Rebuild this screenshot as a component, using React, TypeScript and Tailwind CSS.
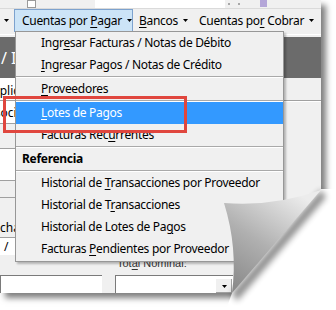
import React from 'react';

type Entry =
  | { type: 'item'; label: string; at: number; active?: boolean }
  | { type: 'sep' }
  | { type: 'head'; label: string };

const entries: Entry[] = [
  { type: 'item', label: 'Ingresar Facturas / Notas de Débito', at: 4 },
  { type: 'item', label: 'Ingresar Pagos / Notas de Crédito', at: 0 },
  { type: 'sep' },
  { type: 'item', label: 'Proveedores', at: 0 },
  { type: 'sep' },
  { type: 'item', label: 'Lotes de Pagos', at: 0, active: true },
  { type: 'item', label: 'Facturas Recurrentes', at: 12 },
  { type: 'sep' },
  { type: 'head', label: 'Referencia' },
  { type: 'sep' },
  { type: 'item', label: 'Historial de Transacciones por Proveedor', at: 13 },
  { type: 'item', label: 'Historial de Transacciones', at: 14 },
  { type: 'item', label: 'Historial de Lotes de Pagos', at: 24 },
  { type: 'item', label: 'Facturas Pendientes por Proveedor', at: 9 },
];

function Caret({ className = '' }: { className?: string }) {
  return (
    <svg width="5" height="3" viewBox="0 0 5 3" className={className}>
      <path d="M0 0H5L2.5 3Z" fill="currentColor" />
    </svg>
  );
}

function Mn({ text, at }: { text: string; at: number }) {
  return (
    <>
      {text.slice(0, at)}
      <span className="underline decoration-1 underline-offset-2">{text[at]}</span>
      {text.slice(at + 1)}
    </>
  );
}

function MenuBar() {
  return (
    <div className="h-[23px] shrink-0 flex items-stretch bg-[#f0f0f0] text-[12px] tracking-[-0.3px] text-black">
      <div className="w-[14px] flex items-center pl-[4px]">
        <Caret />
      </div>
      <div className="w-[119px] flex items-center gap-[5px] pl-[7px] border border-[#7da2ce] bg-[#cce4f7]">
        <span>
          <Mn text="Cuentas por Pagar" at={12} />
        </span>
        <Caret />
      </div>
      <div className="w-[59px] flex items-center gap-[5px] pl-[6px]">
        <span>
          <Mn text="Bancos" at={0} />
        </span>
        <Caret />
      </div>
      <div className="flex-1 flex items-center gap-[5px] pl-[7px] whitespace-nowrap">
        <span>
          <Mn text="Cuentas por Cobrar" at={10} />
        </span>
        <Caret />
      </div>
    </div>
  );
}

function Dropdown() {
  return (
    <div className="absolute left-[15px] top-[31px] w-[269px] border border-[#979797] bg-[#f0f0f0] pb-px shadow-[2px_2px_2px_rgba(0,0,0,0.25)] text-[12px] tracking-[-0.3px] text-black">
      {entries.map((e, i) => {
        if (e.type === 'sep') {
          return <div key={i} className="h-[2px] border-t border-[#a9a9a9] border-b border-b-white" />;
        }
        if (e.type === 'head') {
          return (
            <div key={i} className="h-[22px] flex items-center pl-[6px] font-bold">
              {e.label}
            </div>
          );
        }
        return (
          <div
            key={i}
            className={
              e.active
                ? 'h-[22px] flex items-center pl-[25px] bg-[#3399ff] text-white'
                : 'h-[22px] flex items-center pl-[25px]'
            }
          >
            <span className="whitespace-nowrap">
              <Mn text={e.label} at={e.at} />
            </span>
          </div>
        );
      })}
    </div>
  );
}

function FormArea() {
  return (
    <div className="flex-1 flex flex-col text-[12px] text-black overflow-hidden">
      <div className="h-[22px] w-[200px] bg-white pt-[4px] leading-[18px] whitespace-nowrap">
        <span className="-ml-[8px]">Aplicación</span>
      </div>
      <div className="h-px bg-[#a0a0a0]" />
      <div className="h-px bg-white" />
      <div className="h-[21px] w-[200px] bg-white leading-[21px] whitespace-nowrap">
        <span className="-ml-[13px]">Asociación</span>
      </div>
      <div className="h-px w-[200px] bg-[#a0a0a0]" />
      <div className="h-[24px]" />
      <div className="h-px w-[200px] bg-[#a0a0a0]" />
      <div className="h-[31px] w-[200px] bg-white" />
      <div className="h-px w-[200px] bg-[#a0a0a0]" />
      <div className="h-[16px]" />
      <div className="h-px w-[200px] bg-[#a0a0a0]" />
      <div className="h-[39px] flex items-end pb-[1px] leading-[16px] whitespace-nowrap">
        <span className="-ml-[13px]">Fecha</span>
      </div>
      <div className="h-px w-[200px] bg-[#a0a0a0]" />
      <div className="h-[17px] w-[60px] bg-white leading-[17px] pl-[4px]">/</div>
      <div className="h-[20px] flex items-end pb-[5px] pl-[117px] font-['Liberation_Sans',Arial,sans-serif] text-[11px] leading-[14px] text-[#333]">
        <span>
          <Mn text="Total Nominal:" at={3} />
        </span>
      </div>
      <div className="h-[18px] flex">
        <div className="w-[102px] bg-white border-t border-l border-[#7a7a7a]" />
        <div className="ml-[13px] w-[118px] flex bg-white border-t border-l border-[#7a7a7a]">
          <div className="flex-1" />
          <div className="w-[17px] mt-[2px] mr-px flex items-center justify-center bg-[#f0f0f0] border-l border-t border-white shadow-[inset_-1px_-1px_0_#a0a0a0]">
            <Caret />
          </div>
        </div>
      </div>
    </div>
  );
}

function Curl() {
  return (
    <svg className="absolute inset-0 pointer-events-none" width="336" height="310" viewBox="0 0 336 310">
      <defs>
        <filter id="soft" x="-30%" y="-30%" width="160%" height="160%">
          <feGaussianBlur stdDeviation="3" />
        </filter>
        <linearGradient id="flap" gradientUnits="userSpaceOnUse" x1="300" y1="195" x2="238" y2="288">
          <stop offset="0" stopColor="#ececec" />
          <stop offset="0.55" stopColor="#b0b0b0" />
          <stop offset="1" stopColor="#8c8c8c" />
        </linearGradient>
      </defs>
      <polygon points="232,293 321,189 336,189 336,310 226,310" fill="#fff" />
      <path d="M232,293 L321,190 L326,197 L237,301 Z" fill="#000" opacity="0.45" filter="url(#soft)" />
      <path d="M224,203 Q273,207 321,190 L232,293 Q238,248 224,203 Z" fill="url(#flap)" />
    </svg>
  );
}

export default function App() {
  return (
    <div className="relative w-[336px] h-[310px] overflow-hidden bg-white font-['Noto_Sans','Open_Sans',sans-serif]">
      <div className="relative w-[321px] h-[293px] flex flex-col bg-[#f0f0f0] shadow-[5px_5px_6px_rgba(0,0,0,0.5)]">
        <div className="h-[9px] shrink-0 flex border-b border-[#dadada]">
          <div className="w-[27px]" />
          <div className="w-[9px] h-[8px] bg-white border border-[#9a9a9a]" />
          <div className="w-[59px]" />
          <div className="w-[130px] bg-white" />
          <div className="flex-1 flex items-start gap-[8px] pl-[3px] pt-[3px]">
            <div className="w-[2px] h-[2px] bg-[#a8a8a8]" />
            <div className="w-[2px] h-[2px] bg-[#a8a8a8]" />
            <div className="ml-[12px] -mt-[3px] w-[7px] h-[7px] bg-[#b4a6d8]" />
          </div>
        </div>
        <MenuBar />
        <div className="h-[5px] shrink-0 pt-[2px]">
          <div className="h-px bg-white" />
        </div>
        <div className="h-[41px] shrink-0 bg-[#6b6b6b] pt-[12px] pl-[1px] text-[16px] leading-[18px] text-white whitespace-nowrap">
          / I
        </div>
        <FormArea />
        <Dropdown />
        <div className="absolute left-[3px] top-[96px] w-[184px] h-[37px] border-[3px] border-[#e0463e]" />
      </div>
      <Curl />
    </div>
  );
}
